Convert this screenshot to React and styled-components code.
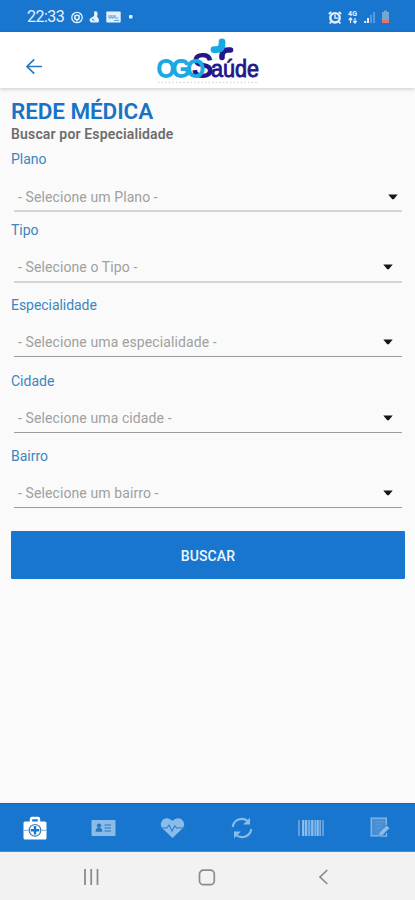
import React from 'react';
import styled, { createGlobalStyle } from 'styled-components';

const GlobalStyle = createGlobalStyle`
  * { box-sizing: border-box; }
  body { margin: 0; background: #fafafa; font-family: Roboto, sans-serif; }
  svg { display: block; flex: none; }
`;

const Screen = styled.div`
  width: 415px;
  height: 900px;
  display: flex;
  flex-direction: column;
  overflow: hidden;
  background: #fafafa;
`;

const StatusBar = styled.div`
  height: 32px;
  flex: none;
  display: flex;
  align-items: center;
  justify-content: space-between;
  padding: 2px 25px 0 27px;
  background: #1976cf;
  color: #e4f1fd;
`;

const StatusGroup = styled.div`
  display: flex;
  align-items: center;
  gap: ${(p) => p.$gap}px;
`;

const Clock = styled.span`
  width: 37px;
  font-size: 16px;
  line-height: 20px;
  letter-spacing: -0.55px;
  white-space: nowrap;
  margin-right: 1px;
`;

const Header = styled.header`
  height: 56px;
  flex: none;
  display: grid;
  grid-template-columns: 157px 104px 1fr;
  align-items: start;
  background: #fff;
  box-shadow: 0 1px 4px rgba(0, 0, 0, 0.2);
`;

const BackButton = styled.button`
  justify-self: start;
  margin: 25px 0 0 25px;
  padding: 0;
  border: 0;
  background: none;
`;

const Logo = styled.svg`
  margin-top: 4px;
  overflow: visible;
`;

const Content = styled.main`
  flex: 1;
  display: flex;
  flex-direction: column;
  padding: 9px 10px 0 11px;
`;

const Title = styled.h1`
  margin: 0;
  font-size: 22.5px;
  font-weight: 600;
  line-height: 28px;
  letter-spacing: -0.1px;
  color: #1873c5;
  white-space: nowrap;
`;

const Subtitle = styled.h2`
  margin: 1px 0 8px;
  font-size: 14px;
  font-weight: 600;
  line-height: 17px;
  letter-spacing: 0.16px;
  color: #6d6d6d;
`;

const Field = styled.div`
  flex: none;
  height: ${(p) => p.$height}px;
`;

const Label = styled.label`
  display: block;
  font-size: 14px;
  line-height: 16px;
  letter-spacing: ${(p) => p.$tracking}px;
  color: #3b86bf;
`;

const Select = styled.div`
  height: 31px;
  margin: ${(p) => p.$top}px 3px 0;
  padding: 2px ${(p) => p.$inset}px 0 4px;
  display: flex;
  align-items: center;
  justify-content: space-between;
  border-bottom: ${(p) => (p.$soft ? '2px solid #d5d5d5' : '1px solid #9d9d9d')};
  font-size: 14px;
  letter-spacing: 0.1px;
  color: #a0a0a0;
`;

const SearchButton = styled.button`
  flex: none;
  height: 48px;
  margin-top: 7px;
  padding-top: 3px;
  border: 0;
  border-radius: 1px;
  background: #1976cf;
  color: #edf6ff;
  font: 500 14px/20px Roboto, sans-serif;
  letter-spacing: 0.1px;
`;

const TabBar = styled.nav`
  height: 49px;
  flex: none;
  display: grid;
  grid-template-columns: repeat(6, 1fr);
  place-items: center;
  background: #1976cf;
  border-top: 1px solid #1468bb;
  border-bottom: 1px solid #3b8cda;
`;

const Tab = styled.div`
  color: ${(p) => (p.$active ? '#fff' : '#8bbce9')};
`;

const SystemBar = styled.div`
  height: 48px;
  flex: none;
  display: grid;
  grid-template-columns: 149px 116px 1fr;
  align-items: center;
  background: #f2f2f2;
  color: #8b8b8b;
`;

const SystemKey = styled.div`
  padding-left: ${(p) => p.$left}px;
  padding-top: 2px;
`;

const fields = [
  { label: 'Plano', value: '- Selecione um Plano -', height: 70.5, top: 14, inset: 4, soft: true },
  { label: 'Tipo', value: '- Selecione o Tipo -', height: 75.5, top: 14, inset: 9, soft: true },
  { label: 'Especialidade', value: '- Selecione uma especialidade -', height: 75.5, top: 13, inset: 9 },
  { label: 'Cidade', value: '- Selecione uma cidade -', height: 75.5, top: 13, inset: 9 },
  { label: 'Bairro', value: '- Selecione um bairro -', height: 75.5, top: 13, inset: 9 },
];

const Caret = () => (
  <svg width="10" height="6" viewBox="0 0 10 6"><path d="M.3 .5h9.4L5.8 5.2H4.2z" fill="#161616" /></svg>
);

const BrandLogo = () => (
  <Logo width="104" height="48" viewBox="0 0 104 48">
    <path d="M73.5 14H71q-6 0-6 6v1.5" fill="none" stroke="#24178a" strokeWidth="5.6" strokeLinecap="round" />
    <path d="M57 13.6h2.5q5.5 0 5.5-5V5.8" fill="none" stroke="#17a9e7" strokeWidth="6.8" strokeLinecap="round" />
    <text x="35" y="41" fill="#24178a" stroke="#24178a" strokeWidth="1.8" fontFamily="Liberation Sans, sans-serif" fontSize="34" textLength="21" lengthAdjust="spacingAndGlyphs">S</text>
    <text x="0" y="40.7" fill="#1ba9e6" stroke="#1ba9e6" strokeWidth="1.8" fontFamily="Liberation Sans, sans-serif" fontSize="23" letterSpacing="-3">OGO</text>
    <text x="54" y="41" fill="#24178a" stroke="#24178a" strokeWidth=".9" fontFamily="Liberation Sans, sans-serif" fontSize="23" textLength="48" lengthAdjust="spacingAndGlyphs">aúde</text>
    <path d="M1 46.5h101" stroke="#d3dde3" strokeWidth="1.3" strokeDasharray="1.6 2" />
  </Logo>
);

const tabs = [
  <svg key="kit" width="24" height="24" viewBox="0 0 24 24">
    <path d="M8 6V3q0-1 1-1h6q1 0 1 1v3" fill="none" stroke="currentColor" strokeWidth="2.4" />
    <rect x=".5" y="5.5" width="23" height="18" rx="1.5" fill="currentColor" />
    <circle cx="12" cy="14.3" r="5.8" fill="none" stroke="#337fc2" strokeWidth="1.2" />
    <path d="M12 10v8.6M7.7 14.3h8.6" stroke="#1976cf" strokeWidth="2.4" />
    <path d="M.5 14.3H6M18 14.3h5.5" stroke="#78afdf" strokeWidth="1" />
  </svg>,
  <svg key="card" width="25" height="18" viewBox="0 0 25 18">
    <rect x=".5" y="1" width="24" height="16" rx="1.2" fill="currentColor" />
    <circle cx="8" cy="6.6" r="2.2" fill="#2878bd" /><path d="M4.5 12.8q0-4 3.5-4t3.5 4z" fill="#2878bd" />
    <path d="M13.5 6h6.5M13.5 9h6.5M13.5 12h6.5" stroke="#2878bd" strokeWidth="1.2" />
  </svg>,
  <svg key="heart" width="25" height="22" viewBox="0 0 25 22">
    <path d="M12.5 21 2.3 11.3C-2.5 5.5 5.5-3.5 12.5 4 19.5-3.5 27.5 5.5 22.7 11.3z" fill="currentColor" />
    <path d="M0 11h7l2-3 3 6 2.7-5 2 2H25" fill="none" stroke="#2b7fca" strokeWidth="1.1" />
  </svg>,
  <svg key="sync" width="22" height="22" viewBox="0 0 22 22">
    <path d="M1.7 10A9.3 9.3 0 0 1 16.8 4M20.3 12A9.3 9.3 0 0 1 5.2 18" fill="none" stroke="currentColor" strokeWidth="2.1" />
    <path d="M19 .8v6.8h-7zM3 21.2v-6.8h7z" fill="currentColor" />
  </svg>,
  <svg key="barcode" width="26" height="18" viewBox="0 0 26 18">
    <rect x="4" y="1" width="17.5" height="16" fill="currentColor" opacity=".35" />
    <path d="M1 1v16M11 1v16M17.2 1v16M22.2 1v16M25 1v16" stroke="currentColor" strokeWidth="1.2" />
    <path d="M5 1v16M8 1v16M14.2 1v16M19.7 1v16" stroke="currentColor" strokeWidth="2" />
  </svg>,
  <svg key="note" width="21" height="21" viewBox="0 0 21 21">
    <path d="M16.3 8V1.2H1.2v17.6h8" fill="#478fd2" stroke="currentColor" strokeWidth="1.3" />
    <path d="M5 5h8M5 8h7M5 11h6" stroke="#619fd8" strokeWidth=".8" />
    <path d="m9 19 .8-3.6L16.7 8.5l2.7 2.7-6.8 6.8z" fill="currentColor" />
    <path d="M10 19.2h6.5V16" fill="none" stroke="currentColor" strokeWidth="1.2" />
  </svg>,
];

export default function App() {
  return (
    <Screen>
      <GlobalStyle />
      <StatusBar>
        <StatusGroup $gap={6}>
          <Clock>22:33</Clock>
          <svg width="12" height="13" viewBox="0 0 12 13" fill="none" stroke="currentColor">
            <circle cx="6" cy="6.5" r="5.2" strokeWidth="1.3" /><circle cx="6" cy="6.5" r="2.2" strokeWidth="1.5" />
            <path d="M3 3.5 4.5 5M9 3.5 7.5 5M6 9v2" />
          </svg>
          <svg width="11" height="12" viewBox="0 0 11 12" fill="currentColor">
            <path d="M5.2.5Q8.7-.3 8.6 3L8 5.5Q11.5 9 9 11.5H2Q-.4 9.4 1.1 7.5L5 5z" />
            <path d="m3 8 2.4 1.5" stroke="#1976cf" />
          </svg>
          <svg width="15" height="12" viewBox="0 0 15 12">
            <rect x=".3" y=".5" width="14.4" height="11" rx="1" fill="currentColor" />
            <path d="M3 4v3h2V4M6 4v3h2V4M9 4v3h3M8 9.4h5" fill="none" stroke="#5d9fd7" strokeWidth="1" />
          </svg>
          <svg width="10" height="4" viewBox="0 0 10 4"><rect x="2" y="0" width="3.5" height="3.5" rx=".8" fill="currentColor" /></svg>
        </StatusGroup>
        <StatusGroup $gap={6}>
          <svg width="14" height="13" viewBox="0 0 14 13">
            <circle cx="7" cy="6.8" r="4.7" fill="#1976cf" stroke="currentColor" strokeWidth="2.4" />
            <path d="m.8 3 2.5-2M13.2 3l-2.5-2M3 10.8l-1.3 1.7M11 10.8l1.3 1.7" stroke="currentColor" strokeWidth="1.8" />
            <path d="M7 3.5v3.6h3" fill="none" stroke="currentColor" strokeWidth="1.4" />
          </svg>
          <svg width="10" height="14" viewBox="0 0 10 14">
            <text x="0" y="6" fill="currentColor" fontFamily="Roboto, sans-serif" fontWeight="700" fontSize="7" textLength="9">4G</text>
            <path d="M2.5 13V8M.8 10l1.7-2 1.7 2M7 8v5M5.3 11 7 13l1.7-2" fill="none" stroke="currentColor" strokeWidth="1.2" />
          </svg>
          <svg width="11" height="12" viewBox="0 0 11 12">
            <path d="M1.2 12v-2M4 12V7" stroke="currentColor" strokeWidth="2" />
            <path d="M7 12V4M10 12V1" stroke="#5ba0de" strokeWidth="1.8" />
          </svg>
          <svg width="9" height="14" viewBox="0 0 9 14">
            <path d="M1 2h2V.6h3V2h2v10.5H1z" fill="#72a6d3" /><path d="M1 10h7v3H1z" fill="#db786c" />
          </svg>
        </StatusGroup>
      </StatusBar>
      <Header>
        <BackButton aria-label="Voltar">
          <svg width="18" height="18" viewBox="0 0 18 18"><path d="M17 9.5H2M9.2 2.3 2 9.5l7.2 7.2" fill="none" stroke="#2878bc" strokeWidth="1.7" /></svg>
        </BackButton>
        <BrandLogo />
      </Header>
      <Content>
        <Title>REDE MÉDICA</Title>
        <Subtitle>Buscar por Especialidade</Subtitle>
        {fields.map((f) => (
          <Field key={f.label} $height={f.height}>
            <Label $tracking={f.label.length > 8 ? -0.05 : 0}>{f.label}</Label>
            <Select $top={f.top} $inset={f.inset} $soft={f.soft}>
              <span>{f.value}</span>
              <Caret />
            </Select>
          </Field>
        ))}
        <SearchButton>BUSCAR</SearchButton>
      </Content>
      <TabBar>
        {tabs.map((icon, i) => <Tab key={icon.key} $active={i === 0}>{icon}</Tab>)}
      </TabBar>
      <SystemBar>
        <SystemKey $left={83}>
          <svg width="17" height="16" viewBox="0 0 17 16"><path d="M2 0v16M8.2 0v16M14.5 0v16" stroke="currentColor" strokeWidth="1.8" /></svg>
        </SystemKey>
        <SystemKey $left={49}>
          <svg width="18" height="17" viewBox="0 0 18 17"><rect x="1.5" y="1.2" width="14.8" height="14.5" rx="4" fill="none" stroke="currentColor" strokeWidth="1.7" /></svg>
        </SystemKey>
        <SystemKey $left={53}>
          <svg width="11" height="16" viewBox="0 0 11 16"><path d="M9.3 1 2 8l7.3 7" fill="none" stroke="currentColor" strokeWidth="1.7" /></svg>
        </SystemKey>
      </SystemBar>
    </Screen>
  );
}
